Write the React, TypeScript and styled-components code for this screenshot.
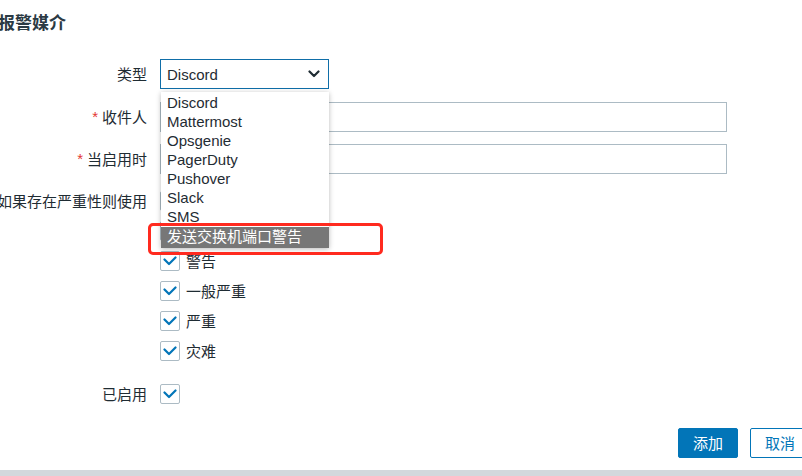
import React from 'react';
import styled, { createGlobalStyle } from 'styled-components';

const GlobalStyle = createGlobalStyle`
  html, body {
    margin: 0;
    padding: 0;
    background: #ffffff;
  }
  body {
    font-family: "Liberation Sans", "Noto Sans CJK SC", sans-serif;
    font-size: 15px;
    color: #1f2c33;
  }
`;

const Page = styled.div`
  position: relative;
  width: 802px;
  height: 476px;
  overflow: hidden;
  background: #ffffff;
  display: flex;
  flex-direction: column;
`;

const Title = styled.h2`
  margin: 0 0 0 -2px;
  height: 50px;
  line-height: 48px;
  font-size: 17px;
  font-weight: 700;
  color: #2b3a44;
`;

const FormRow = styled.div<{ $mt: number }>`
  display: flex;
  align-items: flex-start;
  gap: 13px;
  margin-top: ${(p) => p.$mt}px;
`;

const Label = styled.div<{ $h: number }>`
  box-sizing: border-box;
  flex: none;
  width: 147px;
  height: ${(p) => p.$h}px;
  padding-bottom: 2px;
  display: flex;
  align-items: center;
  justify-content: flex-end;
  white-space: nowrap;
  color: #1f2c33;
`;

const Required = styled.span`
  color: #e33734;
  margin-right: 4px;
`;

const SelectWrap = styled.div`
  position: relative;
  width: 169px;
`;

const SelectBox = styled.div`
  box-sizing: border-box;
  height: 30px;
  border: 1px solid #0f6ea8;
  display: flex;
  align-items: center;
  justify-content: space-between;
  padding: 0 8px 0 6px;
  background: #ffffff;
`;

const Dropdown = styled.ul`
  position: absolute;
  z-index: 2;
  top: 33px;
  left: 1px;
  width: 168px;
  margin: 0;
  padding: 1px 0 0;
  list-style: none;
  background: #ffffff;
  box-shadow: 0 1px 5px rgba(0, 0, 0, 0.28);
`;

const Option = styled.li<{ $active?: boolean }>`
  height: ${(p) => (p.$active ? 21 : 19)}px;
  line-height: ${(p) => (p.$active ? 20 : 19)}px;
  margin-top: ${(p) => (p.$active ? 1 : 0)}px;
  padding-left: 6px;
  white-space: nowrap;
  color: ${(p) => (p.$active ? '#ffffff' : '#1f2c33')};
  background: ${(p) => (p.$active ? '#777777' : 'transparent')};
`;

const TextInput = styled.div`
  box-sizing: border-box;
  width: 567px;
  height: 30px;
  border: 1px solid #acbbc4;
  background: #ffffff;
`;

const CheckList = styled.div`
  display: flex;
  flex-direction: column;
  gap: 10px;
`;

const CheckItem = styled.div`
  display: flex;
  align-items: center;
  gap: 6px;
  height: 20px;
  white-space: nowrap;
`;

const CheckText = styled.span`
  margin-top: -2px;
`;

const Box = styled.span`
  box-sizing: border-box;
  width: 20px;
  height: 20px;
  border: 1px solid #acbbc4;
  border-radius: 2px;
  display: flex;
  align-items: center;
  justify-content: center;
  background: #ffffff;
`;

const Footer = styled.div`
  display: flex;
  justify-content: flex-end;
  gap: 12px;
  margin: 24px -8px 0 0;
`;

const Button = styled.button<{ $primary?: boolean }>`
  box-sizing: border-box;
  width: 60px;
  height: 30px;
  border-radius: 2px;
  border: 1px solid #0275b8;
  font-family: inherit;
  font-size: 15px;
  padding: 0 0 2px;
  color: ${(p) => (p.$primary ? '#ffffff' : '#0275b8')};
  background: ${(p) => (p.$primary ? '#0275b8' : '#ffffff')};
`;

const BottomBar = styled.div`
  margin-top: 12px;
  height: 6px;
  background: #d3d8dc;
`;

const Highlight = styled.div`
  position: absolute;
  z-index: 3;
  left: 148px;
  top: 223px;
  width: 235px;
  height: 32px;
  box-sizing: border-box;
  border: 3px solid #ff2a1f;
  border-radius: 5px;
`;

const Check = () => (
  <svg width="14" height="10" viewBox="0 0 14 10">
    <polyline points="1.5,3.5 6,8 12.5,1.5" fill="none" stroke="#0275b8" strokeWidth="2.2" strokeLinecap="round" strokeLinejoin="round" />
  </svg>
);

const Chevron = () => (
  <svg width="12" height="8" viewBox="0 0 12 8">
    <polyline points="1.5,1.5 6,6 10.5,1.5" fill="none" stroke="#1f2c33" strokeWidth="2.2" strokeLinecap="round" strokeLinejoin="round" />
  </svg>
);

const mediaTypes = ['Discord', 'Mattermost', 'Opsgenie', 'PagerDuty', 'Pushover', 'Slack', 'SMS', '发送交换机端口警告'];
const severities = ['未分类', '信息', '警告', '一般严重', '严重', '灾难'];

const App: React.FC = () => {
  return (
    <Page>
      <GlobalStyle />
      <Title>报警媒介</Title>

      <FormRow $mt={9}>
        <Label $h={30}>类型</Label>
        <SelectWrap>
          <SelectBox>
            <span>Discord</span>
            <Chevron />
          </SelectBox>
          <Dropdown>
            {mediaTypes.map((m, i) => (
              <Option key={m} $active={i === mediaTypes.length - 1}>{m}</Option>
            ))}
          </Dropdown>
        </SelectWrap>
      </FormRow>

      <FormRow $mt={13}>
        <Label $h={30}><Required>*</Required>收件人</Label>
        <TextInput />
      </FormRow>

      <FormRow $mt={12}>
        <Label $h={30}><Required>*</Required>当启用时</Label>
        <TextInput />
      </FormRow>

      <FormRow $mt={17}>
        <Label $h={20}>如果存在严重性则使用</Label>
        <CheckList>
          {severities.map((s) => (
            <CheckItem key={s}>
              <Box><Check /></Box>
              <CheckText>{s}</CheckText>
            </CheckItem>
          ))}
        </CheckList>
      </FormRow>

      <FormRow $mt={23}>
        <Label $h={20}>已启用</Label>
        <Box><Check /></Box>
      </FormRow>

      <Footer>
        <Button $primary>添加</Button>
        <Button>取消</Button>
      </Footer>

      <BottomBar />
      <Highlight />
    </Page>
  );
};

export default App;
